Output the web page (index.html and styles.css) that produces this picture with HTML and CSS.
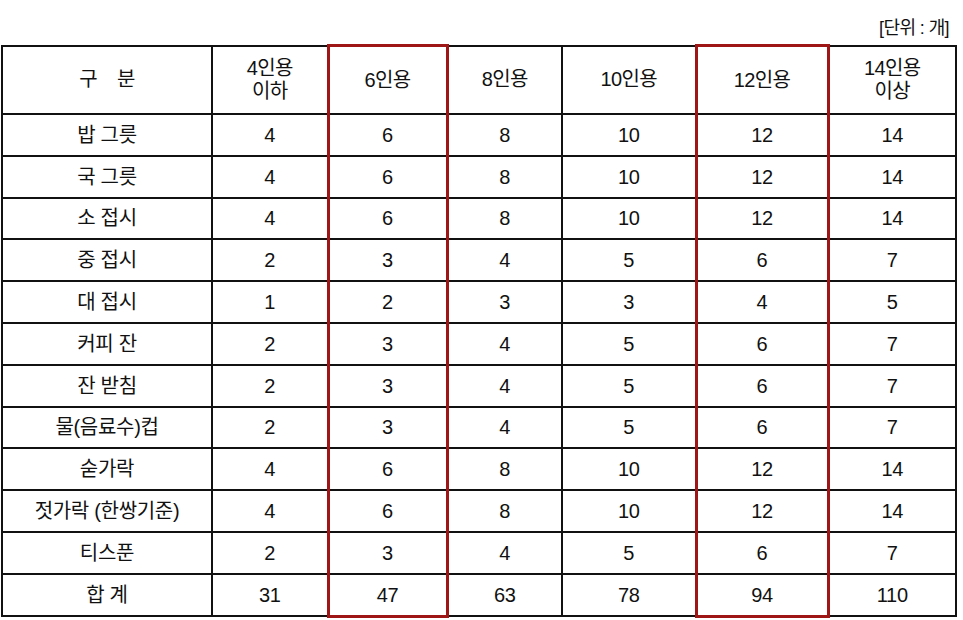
FILE: index.html
```html
<!DOCTYPE html>
<html lang="ko">
<head>
<meta charset="utf-8">
<title>인원별 식기 구성</title>
<link rel="stylesheet" href="styles.css">
</head>
<body>
<div class="page">
  <div class="unit">[단위 : 개]</div>
  <table class="grid">
    <colgroup>
      <col class="c-name"><col class="c4"><col class="c6"><col class="c8"><col class="c10"><col class="c12"><col class="c14">
    </colgroup>
    <thead>
      <tr class="head">
        <th class="wide">구&nbsp;&nbsp;&nbsp;&nbsp;분</th>
        <th>4인용<br>이하</th>
        <th class="hl">6인용</th>
        <th>8인용</th>
        <th>10인용</th>
        <th class="hl">12인용</th>
        <th>14인용<br>이상</th>
      </tr>
    </thead>
    <tbody>
      <tr><td>밥 그릇</td><td>4</td><td class="hl">6</td><td>8</td><td>10</td><td class="hl">12</td><td>14</td></tr>
      <tr><td>국 그릇</td><td>4</td><td class="hl">6</td><td>8</td><td>10</td><td class="hl">12</td><td>14</td></tr>
      <tr><td>소 접시</td><td>4</td><td class="hl">6</td><td>8</td><td>10</td><td class="hl">12</td><td>14</td></tr>
      <tr><td>중 접시</td><td>2</td><td class="hl">3</td><td>4</td><td>5</td><td class="hl">6</td><td>7</td></tr>
      <tr><td>대 접시</td><td>1</td><td class="hl">2</td><td>3</td><td>3</td><td class="hl">4</td><td>5</td></tr>
      <tr><td>커피 잔</td><td>2</td><td class="hl">3</td><td>4</td><td>5</td><td class="hl">6</td><td>7</td></tr>
      <tr><td>잔 받침</td><td>2</td><td class="hl">3</td><td>4</td><td>5</td><td class="hl">6</td><td>7</td></tr>
      <tr><td>물(음료수)컵</td><td>2</td><td class="hl">3</td><td>4</td><td>5</td><td class="hl">6</td><td>7</td></tr>
      <tr><td>숟가락</td><td>4</td><td class="hl">6</td><td>8</td><td>10</td><td class="hl">12</td><td>14</td></tr>
      <tr><td>젓가락 (한쌍기준)</td><td>4</td><td class="hl">6</td><td>8</td><td>10</td><td class="hl">12</td><td>14</td></tr>
      <tr><td>티스푼</td><td>2</td><td class="hl">3</td><td>4</td><td>5</td><td class="hl">6</td><td>7</td></tr>
      <tr class="total"><td>합 계</td><td>31</td><td class="hl">47</td><td>63</td><td>78</td><td class="hl">94</td><td>110</td></tr>
    </tbody>
  </table>
</div>
</body>
</html>
```
FILE: styles.css
```css
html, body {
  margin: 0;
  padding: 0;
  background: #ffffff;
}

body {
  font-family: "Liberation Sans", "Noto Sans CJK KR", sans-serif;
  color: #111111;
}

.page {
  width: 963px;
  height: 620px;
  padding-left: 1px;
  box-sizing: border-box;
}

.unit {
  text-align: right;
  padding-right: 14px;
  padding-top: 16px;
  height: 44px;
  box-sizing: border-box;
  font-size: 18px;
  line-height: 24px;
  letter-spacing: -0.6px;
}

.grid {
  width: 954px;
  table-layout: fixed;
  border-collapse: collapse;
  font-size: 20px;
}

.c-name { width: 210px; }
.c4 { width: 116px; }
.c6 { width: 119px; }
.c8 { width: 115px; }
.c10 { width: 134px; }
.c12 { width: 132px; }
.c14 { width: 128px; }

.grid th,
.grid td {
  border: 2px solid #111111;
  text-align: center;
  vertical-align: middle;
  padding: 0;
  font-weight: normal;
}

.grid th {
  height: 66px;
  line-height: 23px;
  letter-spacing: -0.6px;
}

.grid td {
  height: 39.8px;
  line-height: 22px;
  letter-spacing: -0.3px;
}

.grid .hl {
  border-left: 3px solid #9e1616;
  border-right: 3px solid #9e1616;
}

.grid .head .hl {
  border-top: 3px solid #9e1616;
}

.grid .total .hl {
  border-bottom: 3px solid #9e1616;
}
```
